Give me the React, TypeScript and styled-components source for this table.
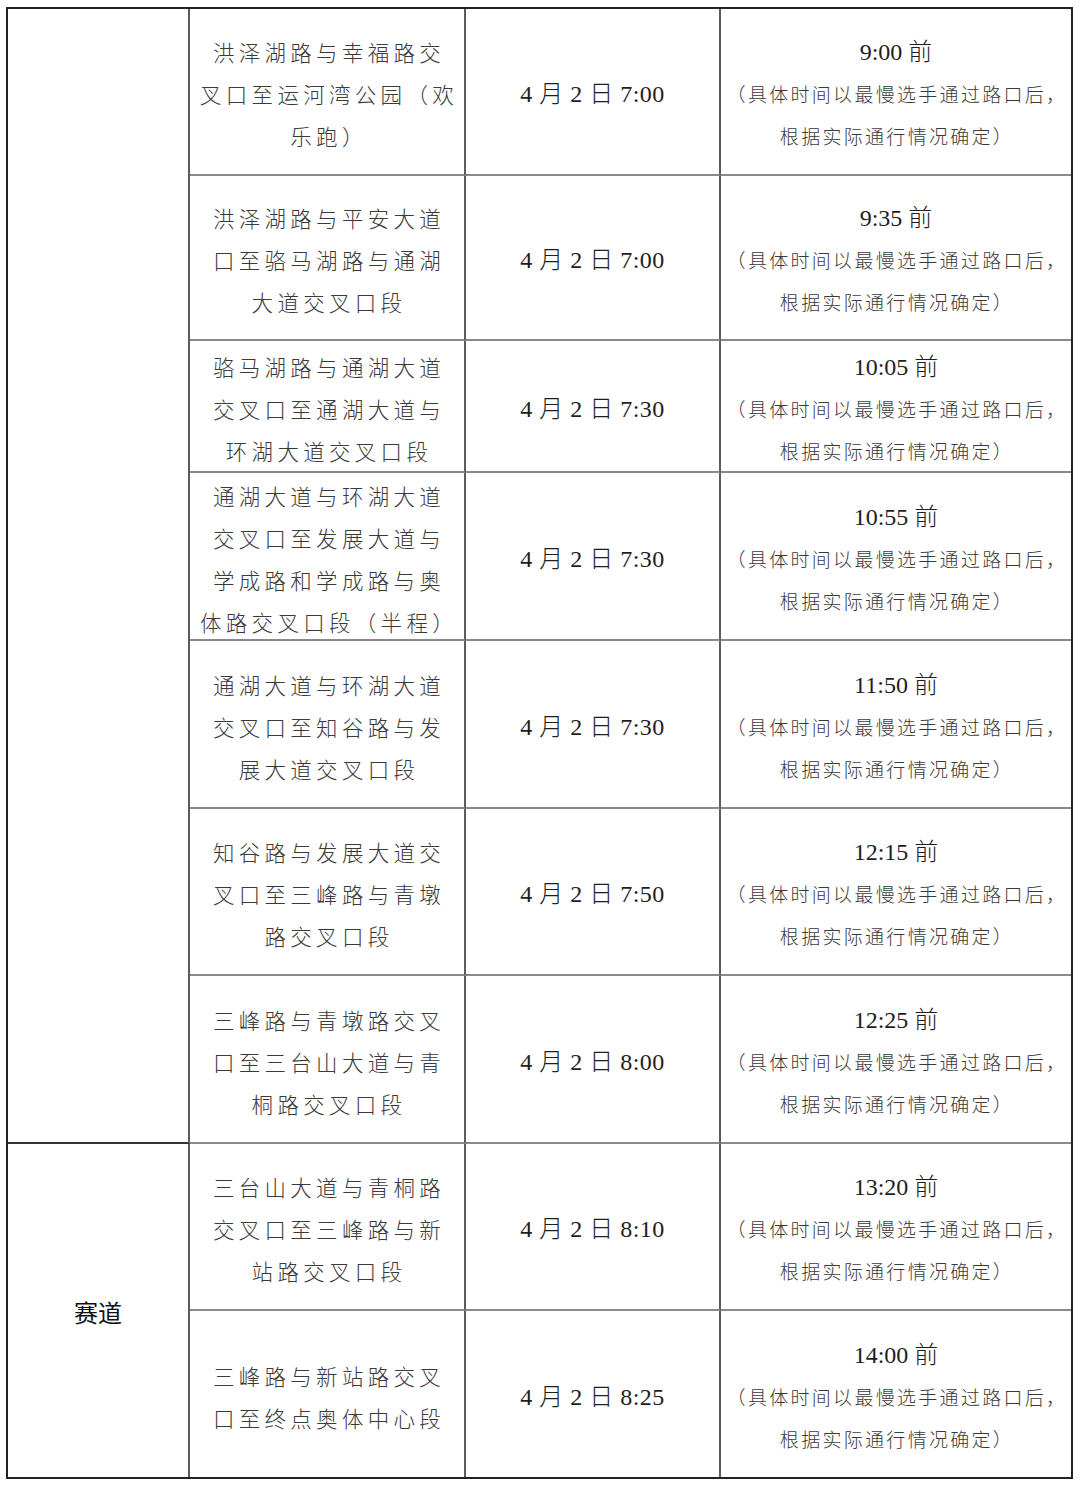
import React from 'react';
import styled, { createGlobalStyle } from 'styled-components';

const GlobalStyle = createGlobalStyle`
  * { box-sizing: border-box; }
  body {
    margin: 0;
    background: #fff;
    font-family: "Liberation Serif", "Noto Sans CJK SC", serif;
    color: #222;
  }
`;

interface IRow {
  place: string[];
  start: string;
  end: string;
}

const rows: IRow[] = [
  { place: ['洪泽湖路与幸福路交', '叉口至运河湾公园（欢', '乐跑）'], start: '4 月 2 日 7:00', end: '9:00 前' },
  { place: ['洪泽湖路与平安大道', '口至骆马湖路与通湖', '大道交叉口段'], start: '4 月 2 日 7:00', end: '9:35 前' },
  { place: ['骆马湖路与通湖大道', '交叉口至通湖大道与', '环湖大道交叉口段'], start: '4 月 2 日 7:30', end: '10:05 前' },
  { place: ['通湖大道与环湖大道', '交叉口至发展大道与', '学成路和学成路与奥', '体路交叉口段（半程）'], start: '4 月 2 日 7:30', end: '10:55 前' },
  { place: ['通湖大道与环湖大道', '交叉口至知谷路与发', '展大道交叉口段'], start: '4 月 2 日 7:30', end: '11:50 前' },
  { place: ['知谷路与发展大道交', '叉口至三峰路与青墩', '路交叉口段'], start: '4 月 2 日 7:50', end: '12:15 前' },
  { place: ['三峰路与青墩路交叉', '口至三台山大道与青', '桐路交叉口段'], start: '4 月 2 日 8:00', end: '12:25 前' },
  { place: ['三台山大道与青桐路', '交叉口至三峰路与新', '站路交叉口段'], start: '4 月 2 日 8:10', end: '13:20 前' },
  { place: ['三峰路与新站路交叉', '口至终点奥体中心段'], start: '4 月 2 日 8:25', end: '14:00 前' },
];

const rowHeights = [167, 165, 132, 168, 168, 167, 168, 167, 166];

const Page = styled.div`
  padding: 7px 0 6px 6px;
`;

const Grid = styled.div`
  display: grid;
  width: 1067px;
  grid-template-columns: 182px 276px 255px 350px;
  grid-template-rows: ${rowHeights.map((h) => `${h}px`).join(' ')};
  border: 2px solid #222;
`;

const Cell = styled.div<{ $lastRow?: boolean; $lastCol?: boolean }>`
  display: flex;
  flex-direction: column;
  align-items: center;
  justify-content: center;
  padding-top: 5px;
  border-right: ${({ $lastCol }) => ($lastCol ? 'none' : '2px solid #5c5c5c')};
  border-bottom: ${({ $lastRow }) => ($lastRow ? 'none' : '2px solid #8a8a8a')};
  text-align: center;
`;

const SideCell = styled(Cell)<{ $from: number; $span: number }>`
  grid-column: 1;
  grid-row: ${({ $from, $span }) => `${$from} / span ${$span}`};
  border-bottom-color: #333;
  font-family: "Noto Sans CJK SC", serif;
  font-size: 24px;
  color: #111;
  padding-top: 2px;
`;

const PlaceLine = styled.div`
  font-family: "Noto Sans CJK SC", sans-serif;
  font-weight: 300;
  font-size: 21.5px;
  letter-spacing: 4.3px;
  padding-left: 4px;
  line-height: 42px;
  white-space: nowrap;
  color: #3a3a3a;
`;

const StartText = styled.div`
  font-size: 24px;
  font-weight: 300;
  letter-spacing: 0.5px;
  line-height: 42px;
  color: #1e1e1e;
  white-space: pre;
`;

const EndTime = styled.div`
  font-size: 24px;
  font-weight: 300;
  line-height: 42px;
  color: #1e1e1e;
  white-space: pre;
`;

const Note = styled.div`
  font-family: "Noto Sans CJK SC", sans-serif;
  font-weight: 300;
  font-size: 19px;
  letter-spacing: 2.3px;
  padding-left: 2px;
  line-height: 42px;
  color: #3a3a3a;
  white-space: nowrap;
`;

export default function App() {
  const last = rows.length - 1;
  return (
    <>
      <GlobalStyle />
      <Page>
        <Grid>
          <SideCell $from={1} $span={7} />
          <SideCell $from={8} $span={2} $lastRow>
            赛道
          </SideCell>
          {rows.map((row, i) => (
            <React.Fragment key={i}>
              <Cell $lastRow={i === last}>
                {row.place.map((line) => (
                  <PlaceLine key={line}>{line}</PlaceLine>
                ))}
              </Cell>
              <Cell $lastRow={i === last}>
                <StartText>{row.start}</StartText>
              </Cell>
              <Cell $lastRow={i === last} $lastCol>
                <EndTime>{row.end}</EndTime>
                <Note>（具体时间以最慢选手通过路口后，</Note>
                <Note>根据实际通行情况确定）</Note>
              </Cell>
            </React.Fragment>
          ))}
        </Grid>
      </Page>
    </>
  );
}
